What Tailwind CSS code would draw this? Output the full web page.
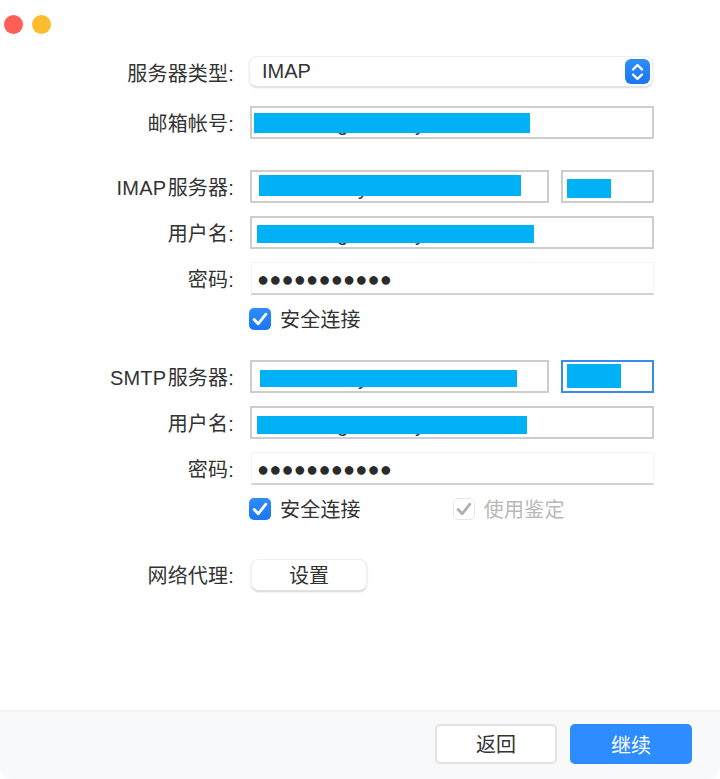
<!DOCTYPE html>
<html lang="zh">
<head>
<meta charset="utf-8">
<script src="https://cdn.jsdelivr.net/npm/@tailwindcss/browser@4"></script>
</head>
<body class="bg-white">
<div class="w-[720px] h-[779px] flex flex-col overflow-hidden text-[20px] leading-[24px] text-[#333333] font-['Liberation_Sans','Noto_Sans_CJK_SC',sans-serif]">
  <!-- title bar -->
  <div class="h-[56px] shrink-0 flex items-start gap-[9px] pl-[4px] pt-[15px]">
    <span class="w-[19px] h-[19px] rounded-full bg-[#ff5f57]"></span>
    <span class="w-[19px] h-[19px] rounded-full bg-[#febc2e]"></span>
  </div>

  <!-- form -->
  <div class="flex-1 flex flex-col">
    <div class="flex items-center h-[31px] mb-[19px]">
      <label class="w-[234px] text-right tracking-[0.2px] pt-[4px]">服务器类型:</label>
      <div class="ml-[15px] w-[404px] h-[31px] rounded-[8px] bg-white border border-[#f0f0f0] border-b-[#e2e2e2] shadow-[0_1px_2px_rgba(0,0,0,0.14)] flex items-center justify-between pl-[12px] pr-[2px]">
        <span class="text-[#333333] -mt-[2px]">IMAP</span>
        <span class="w-[25px] h-[25px] rounded-[6px] bg-linear-to-b from-[#2f8dfc] to-[#1a76f2] flex items-center justify-center">
          <svg width="15" height="20" viewBox="0 0 15 20" fill="none" stroke="#ffffff" stroke-width="2.4" stroke-linecap="round" stroke-linejoin="round"><path d="M3 7.5 7.5 3 12 7.5"/><path d="M3 12.5 7.5 17 12 12.5"/></svg>
        </span>
      </div>
    </div>

    <div class="flex items-center h-[33px] mb-[31px]">
      <label class="w-[234px] text-right tracking-[0.2px] pt-[2px]">邮箱帐号:</label>
      <div class="relative ml-[16px] w-[404px] h-[33px] border-2 border-[#cdcdcd] bg-white pl-[2px] pt-[5px]">
        <span class="absolute left-[85px] top-[4px]">g</span>
        <span class="absolute left-[163px] top-[4px]">y</span>
        <span class="relative block w-[276px] h-[20px] bg-[#00b2f5]"></span>
      </div>
    </div>

    <div class="flex items-center h-[33px] mb-[13px]">
      <label class="w-[234px] text-right pt-[2px] tracking-[0.2px] [word-spacing:-4px]">IMAP 服务器:</label>
      <div class="relative ml-[16px] w-[299px] h-[33px] border-2 border-[#cdcdcd] bg-white pl-[7px] pt-[3px]">
        <span class="absolute left-[106px] top-[4px]">y</span>
        <span class="relative block w-[262px] h-[21px] bg-[#00b2f5]"></span>
      </div>
      <div class="ml-[12px] w-[93px] h-[33px] border-2 border-[#cdcdcd] bg-white pl-[4px] pt-[7px]">
        <span class="block w-[44px] h-[19px] bg-[#00b2f5]"></span>
      </div>
    </div>

    <div class="flex items-center h-[33px] mb-[13px]">
      <label class="w-[234px] text-right pt-[2px] tracking-[0.2px]">用户名:</label>
      <div class="relative ml-[16px] w-[404px] h-[33px] border-2 border-[#cdcdcd] bg-white pl-[5px] pt-[7px]">
        <span class="absolute left-[85px] top-[4px]">g</span>
        <span class="absolute left-[163px] top-[4px]">y</span>
        <span class="relative block w-[277px] h-[18px] bg-[#00b2f5]"></span>
      </div>
    </div>

    <div class="flex items-center h-[33px] mb-[13px]">
      <label class="w-[234px] text-right pt-[2px] tracking-[0.2px]">密码:</label>
      <div class="ml-[17px] w-[403px] h-[33px] border border-[#f3f3f3] border-b-[2px] border-b-[#d2d2d2] bg-white pl-[5px] pt-[1px] flex items-center text-[20px] tracking-[0.2px] text-[#2b2b2b]">●●●●●●●●●●●</div>
    </div>

    <div class="flex items-center h-[23px] mb-[29px] pl-[249px]">
      <span class="-mt-[2px] w-[22px] h-[22px] rounded-[5px] bg-linear-to-b from-[#2f8dfc] to-[#1a76f2] flex items-center justify-center">
        <svg width="16" height="14" viewBox="0 0 15 13" fill="none" stroke="#ffffff" stroke-width="2.6" stroke-linecap="round" stroke-linejoin="round"><path d="M2 7 5.8 11 13 2"/></svg>
      </span>
      <span class="ml-[9px] tracking-[0.2px]">安全连接</span>
    </div>

    <div class="flex items-center h-[33px] mb-[13px]">
      <label class="w-[234px] text-right pt-[2px] tracking-[0.2px] [word-spacing:-4px]">SMTP 服务器:</label>
      <div class="relative ml-[16px] w-[299px] h-[33px] border-2 border-[#cdcdcd] bg-white pl-[8px] pt-[8px]">
        <span class="absolute left-[106px] top-[4px]">y</span>
        <span class="relative block w-[257px] h-[17px] bg-[#00b2f5]"></span>
      </div>
      <div class="ml-[12px] w-[93px] h-[33px] border-2 border-[#3a8bf0] bg-white pl-[4px] pt-[2px]">
        <span class="block w-[54px] h-[24px] bg-[#00b2f5]"></span>
      </div>
    </div>

    <div class="flex items-center h-[33px] mb-[13px]">
      <label class="w-[234px] text-right pt-[2px] tracking-[0.2px]">用户名:</label>
      <div class="relative ml-[16px] w-[404px] h-[33px] border-2 border-[#cdcdcd] bg-white pl-[5px] pt-[8px]">
        <span class="absolute left-[85px] top-[5px]">g</span>
        <span class="absolute left-[163px] top-[5px]">y</span>
        <span class="relative block w-[270px] h-[18px] bg-[#00b2f5]"></span>
      </div>
    </div>

    <div class="flex items-center h-[33px] mb-[13px]">
      <label class="w-[234px] text-right pt-[2px] tracking-[0.2px]">密码:</label>
      <div class="ml-[17px] w-[403px] h-[33px] border border-[#f3f3f3] border-b-[2px] border-b-[#d2d2d2] bg-white pl-[5px] pt-[1px] flex items-center text-[20px] tracking-[0.2px] text-[#2b2b2b]">●●●●●●●●●●●</div>
    </div>

    <div class="flex items-center h-[23px] mb-[38px] pl-[249px]">
      <span class="-mt-[2px] w-[22px] h-[22px] rounded-[5px] bg-linear-to-b from-[#2f8dfc] to-[#1a76f2] flex items-center justify-center">
        <svg width="16" height="14" viewBox="0 0 15 13" fill="none" stroke="#ffffff" stroke-width="2.6" stroke-linecap="round" stroke-linejoin="round"><path d="M2 7 5.8 11 13 2"/></svg>
      </span>
      <span class="ml-[9px] tracking-[0.2px]">安全连接</span>
      <span class="-mt-[2px] ml-[92px] w-[22px] h-[22px] rounded-[5px] bg-white border border-[#e6e6e6] flex items-center justify-center">
        <svg width="16" height="14" viewBox="0 0 15 13" fill="none" stroke="#b0b0b0" stroke-width="2.6" stroke-linecap="round" stroke-linejoin="round"><path d="M2 7 5.8 11 13 2"/></svg>
      </span>
      <span class="ml-[9px] tracking-[0.2px] text-[#b8b8b8]">使用鉴定</span>
    </div>

    <div class="flex items-center h-[32px]">
      <label class="w-[234px] text-right pt-[2px] tracking-[0.2px]">网络代理:</label>
      <button class="ml-[17px] w-[116px] h-[32px] rounded-[8px] bg-white border border-[#f0f0f0] border-b-[#e2e2e2] shadow-[0_1px_2px_rgba(0,0,0,0.18)] pt-[2px] text-[#333333]">设置</button>
    </div>
  </div>

  <!-- footer -->
  <div class="h-[69px] shrink-0 bg-[#f8f9fb] border-t-2 border-[#f1f2f4] rounded-b-[12px] flex items-start justify-end gap-[13px] pt-[12px] pr-[28px]">
    <button class="w-[122px] h-[40px] rounded-[5px] bg-white border-2 border-[#e3e3e3] pt-[2px] text-[#333333]">返回</button>
    <button class="w-[122px] h-[40px] rounded-[5px] bg-[#2d8cff] pt-[3px] text-white">继续</button>
  </div>
</div>
</body>
</html>
